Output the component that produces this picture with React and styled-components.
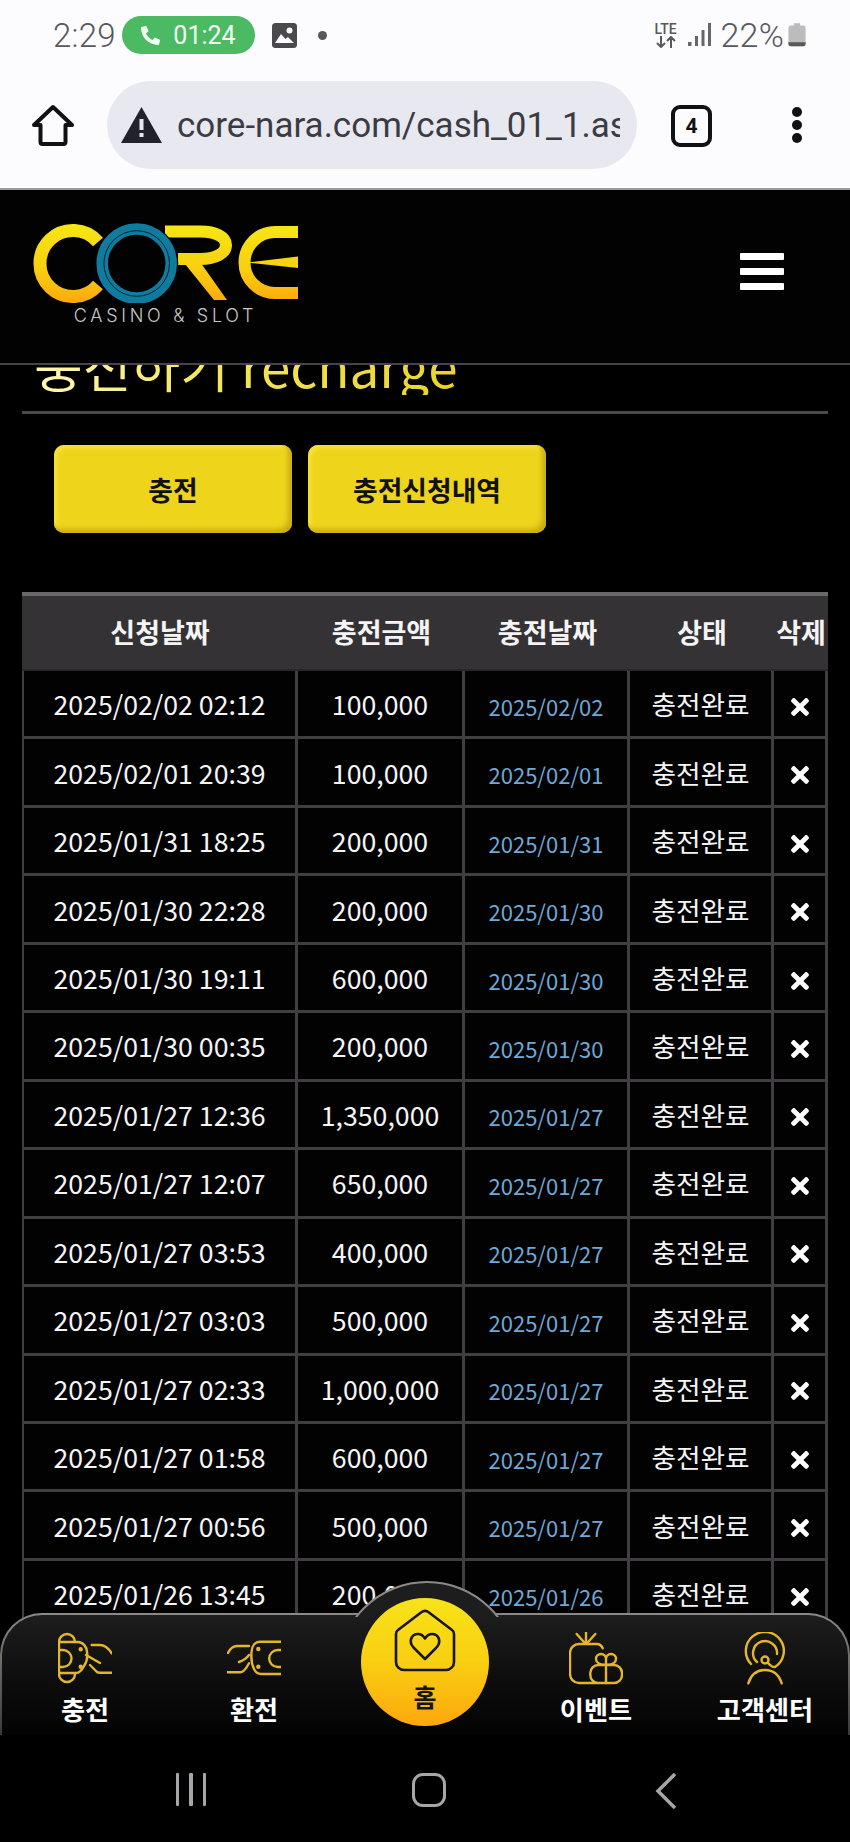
import React from 'react'
import styled, { createGlobalStyle } from 'styled-components'
import { FaTimes, FaPhoneAlt } from 'react-icons/fa'

const GlobalStyle = createGlobalStyle`
  * { box-sizing: border-box; }
  html, body { margin: 0; padding: 0; background: #000; }
  body { font-family: "Noto Sans CJK KR", "Noto Sans", sans-serif; }
`

const Page = styled.div`
  width: 850px;
  height: 1842px;
  display: flex;
  flex-direction: column;
  overflow: hidden;
  background: #000;
`

/* phone status bar */
const StatusBar = styled.div`
  height: 66px;
  flex: none;
  background: #fcfbfe;
  display: flex;
  align-items: center;
  padding: 4px 44px 0 53px;
  font-family: Roboto, sans-serif;
  color: #58585c;
`
const Clock = styled.span`
  width: 63px;
  font-size: 33px;
  letter-spacing: 0.2px;
  font-weight: 300;
  white-space: nowrap;
`
const CallPill = styled.div`
  margin-left: 6px;
  width: 133px;
  height: 38px;
  border-radius: 19px;
  background: #4cb963;
  color: #f4fff6;
  display: flex;
  align-items: center;
  justify-content: center;
  gap: 13px;
  font-size: 25px;
`
const GalleryIcon = styled.svg`
  margin-left: 17px;
  width: 25px;
  height: 25px;
`
const StatusDot = styled.span`
  margin-left: 21px;
  width: 9px;
  height: 9px;
  border-radius: 50%;
  background: #58585c;
`
const StatusRight = styled.div`
  margin-left: auto;
  display: flex;
  align-items: center;
`
const LteMark = styled.div`
  width: 28px;
  display: flex;
  flex-direction: column;
  align-items: center;
  font-size: 14px;
  line-height: 13px;
  font-weight: 500;
  color: #58585c;
`
const SignalIcon = styled.svg`
  margin-left: 8px;
  width: 24px;
  height: 24px;
`
const Percent = styled.span`
  margin-left: 9px;
  font-size: 34px;
  font-weight: 300;
  letter-spacing: 0.2px;
`
const BatteryIcon = styled.svg`
  margin-left: 4px;
  width: 18px;
  height: 26px;
`

/* browser toolbar */
const BrowserBar = styled.div`
  height: 124px;
  flex: none;
  background: #fcfbfe;
  border-bottom: 2px solid #9b9b9f;
  display: flex;
  align-items: flex-start;
  padding: 15px 0 0 31px;
`
const HomeButton = styled.svg`
  width: 44px;
  height: 44px;
  margin-top: 22px;
  flex: none;
`
const AddressPill = styled.div`
  margin-left: 32px;
  width: 530px;
  height: 88px;
  border-radius: 44px;
  background: #e8e8f0;
  display: flex;
  align-items: center;
  padding: 0 17px 0 14px;
  flex: none;
`
const WarnIcon = styled.svg`
  width: 41px;
  height: 38px;
  flex: none;
`
const UrlText = styled.div`
  margin-left: 15px;
  font-family: Roboto, sans-serif;
  font-size: 35px;
  color: #3b3b44;
  white-space: nowrap;
  overflow: hidden;
`
const TabCount = styled.div`
  margin: 24px 0 0 34px;
  width: 41px;
  height: 42px;
  border: 4px solid #111;
  border-radius: 9px;
  display: flex;
  align-items: center;
  justify-content: center;
  font-family: Roboto, sans-serif;
  font-size: 21px;
  font-weight: 700;
  color: #111;
  flex: none;
`
const MenuDots = styled.div`
  margin: 26px 0 0 80px;
  display: flex;
  flex-direction: column;
  gap: 3px;
  span {
    width: 10px;
    height: 10px;
    border-radius: 50%;
    background: #111;
  }
`

/* site */
const Site = styled.div`
  position: relative;
  flex: 1;
  min-height: 0;
  display: flex;
  flex-direction: column;
  background: #000;
`
const SiteHeader = styled.header`
  height: 175px;
  flex: none;
  border-bottom: 2px solid #46444a;
  display: flex;
  justify-content: space-between;
  padding: 33px 66px 0 33px;
  background: #020203;
`
const LogoWrap = styled.div`
  width: 265px;
  display: flex;
  flex-direction: column;
  align-items: center;
`
const LogoMark = styled.svg`
  width: 265px;
  height: 80px;
`
const LogoCaption = styled.span`
  margin-top: 2px;
  font-family: Inter, sans-serif;
  font-size: 18px;
  line-height: 22px;
  font-weight: 300;
  letter-spacing: 3.7px;
  color: #c8c8c8;
  white-space: nowrap;
`
const Burger = styled.div`
  width: 44px;
  margin-top: 30px;
  display: flex;
  flex-direction: column;
  gap: 8px;
  span {
    height: 7px;
    background: #fff;
    border-radius: 1px;
  }
`
const Content = styled.main`
  flex: 1;
  min-height: 0;
  overflow: hidden;
  padding: 0 22px;
`
const TitleRow = styled.div`
  margin-top: -30px;
  padding: 0 0 16px 12px;
  border-bottom: 3px solid #4b494c;
`
const Title = styled.h1`
  margin: 0;
  display: inline-block;
  font-size: 53px;
  line-height: 60px;
  font-weight: 400;
  white-space: nowrap;
  background: linear-gradient(90deg, #fff8b8 0%, #f5e65e 40%, #ead42a 100%);
  -webkit-background-clip: text;
  background-clip: text;
  color: transparent;
`
const ButtonRow = styled.div`
  margin-top: 31px;
  padding-left: 32px;
  display: flex;
  gap: 16px;
`
const TabButton = styled.button`
  width: 238px;
  height: 88px;
  border: none;
  border-radius: 10px;
  background: #eed51c;
  box-shadow: inset -4px -4px 5px #c8ad14, inset 3px 3px 4px #f6e23a;
  color: #111;
  font-family: inherit;
  font-size: 26.8px;
  font-weight: 700;
`
const Table = styled.div`
  margin-top: 59px;
`
const columns = '276px 167px 165px 144px 54px'
const HeadRow = styled.div`
  height: 79px;
  display: grid;
  grid-template-columns: ${columns};
  background: #353236;
  border-top: 4px solid #6b686c;
  border-bottom: 2px solid #29272a;
`
const HeadCell = styled.div`
  display: flex;
  align-items: center;
  justify-content: center;
  padding-bottom: 2px;
  font-size: 27px;
  font-weight: 700;
  color: #f4f4f4;
  white-space: nowrap;
`
const Row = styled.div`
  height: 68.46px;
  display: grid;
  grid-template-columns: ${columns};
`
const Cell = styled.div`
  display: flex;
  align-items: center;
  justify-content: center;
  border-right: 3px solid #403e41;
  border-bottom: 3px solid #403e41;
  border-left: ${p => (p.$first ? '2px solid #403e41' : 'none')};
  font-size: 26.7px;
  color: #f5f5f5;
  white-space: nowrap;
  background: #020203;
`
const DateCell = styled(Cell)`
  padding-top: 4px;
  font-size: 22px;
  color: #6fa9d8;
`
const DeleteCell = styled(Cell)`
  padding-top: 6px;
  color: #fff;
`

/* bottom nav floating over the table */
const BottomNav = styled.nav`
  position: absolute;
  left: 0;
  right: 0;
  bottom: 0;
  height: 122px;
  display: grid;
  grid-template-columns: 166px 172px 170px 172px 166px;
  border: 2px solid transparent;
  border-bottom: none;
  border-radius: 42px 42px 0 0;
  background:
    linear-gradient(#1d1d1e 0%, #0d0d0e 55%, #030304 100%) padding-box,
    linear-gradient(#8d8a86 0%, #5d5b5a 60%, #3a3a3a 100%) border-box;
`
const NavBump = styled.div`
  position: absolute;
  left: 335px;
  top: -34px;
  width: 176px;
  height: 36px;
  overflow: hidden;
  &::before {
    content: '';
    position: absolute;
    left: 0;
    top: 0;
    width: 176px;
    height: 176px;
    border-radius: 50%;
    border: 2px solid #8d8a86;
    background: #1d1d1e;
  }
`
const NavItem = styled.div`
  display: flex;
  flex-direction: column;
  align-items: center;
  padding-top: 17px;
  color: #fff;
  font-size: 26.2px;
  line-height: 34px;
  font-weight: 700;
  white-space: nowrap;
  span {
    margin-top: 6px;
  }
`
const NavIcon = styled.svg`
  width: 54px;
  height: 54px;
  fill: none;
  stroke: #e3b62c;
  stroke-width: 2.4;
  stroke-linecap: round;
  stroke-linejoin: round;
`
const HomeCircle = styled.div`
  position: absolute;
  left: 359px;
  top: -17px;
  width: 128px;
  height: 128px;
  border-radius: 50%;
  background: linear-gradient(#f7e319 0%, #f9cf12 50%, #fda70c 100%);
  display: flex;
  flex-direction: column;
  align-items: center;
  padding-top: 11px;
  color: #151515;
  font-size: 25px;
  line-height: 34px;
  font-weight: 700;
  span {
    margin-top: 6px;
  }
`
const HomeHeart = styled.svg`
  width: 64px;
  height: 64px;
  fill: none;
  stroke: #191510;
  stroke-width: 2.6;
  stroke-linejoin: round;
`

/* android nav */
const AndroidNav = styled.div`
  height: 107px;
  flex: none;
  background: #000;
  display: grid;
  grid-template-columns: repeat(3, 238px);
  justify-items: center;
  align-items: start;
  padding: 38px 0 0 72px;
`
const RecentBars = styled.div`
  display: flex;
  gap: 10px;
  span {
    width: 3.5px;
    height: 33px;
    background: #a6a6a8;
    border-radius: 1px;
  }
`
const HomeSquare = styled.div`
  width: 34px;
  height: 34px;
  border: 3.5px solid #a6a6a8;
  border-radius: 11px;
`
const BackChevron = styled.svg`
  width: 24px;
  height: 36px;
  fill: none;
  stroke: #a6a6a8;
  stroke-width: 3.5;
`

const rows = [
  ['2025/02/02 02:12', '100,000', '2025/02/02'],
  ['2025/02/01 20:39', '100,000', '2025/02/01'],
  ['2025/01/31 18:25', '200,000', '2025/01/31'],
  ['2025/01/30 22:28', '200,000', '2025/01/30'],
  ['2025/01/30 19:11', '600,000', '2025/01/30'],
  ['2025/01/30 00:35', '200,000', '2025/01/30'],
  ['2025/01/27 12:36', '1,350,000', '2025/01/27'],
  ['2025/01/27 12:07', '650,000', '2025/01/27'],
  ['2025/01/27 03:53', '400,000', '2025/01/27'],
  ['2025/01/27 03:03', '500,000', '2025/01/27'],
  ['2025/01/27 02:33', '1,000,000', '2025/01/27'],
  ['2025/01/27 01:58', '600,000', '2025/01/27'],
  ['2025/01/27 00:56', '500,000', '2025/01/27'],
  ['2025/01/26 13:45', '200,000', '2025/01/26'],
]

const heads = ['신청날짜', '충전금액', '충전날짜', '상태', '삭제']

const Logo = () => (
  <LogoMark viewBox="33 222 265 80">
    <defs>
      <linearGradient id="coreGold" gradientUnits="userSpaceOnUse" x1="0" y1="223" x2="0" y2="302">
        <stop offset="0" stopColor="#f6e714" />
        <stop offset="0.55" stopColor="#f8d010" />
        <stop offset="1" stopColor="#fca90c" />
      </linearGradient>
    </defs>
    <path d="M98 241 A33 33 0 1 0 98 284" fill="none" stroke="url(#coreGold)" strokeWidth="13" />
    <path d="M165 230.5 H200 C216 230.5 226 236 226 244 C226 252 216 258 200 258 H178" fill="none" stroke="url(#coreGold)" strokeWidth="12" />
    <polygon points="181,258 198,258 227,299 214,299" fill="url(#coreGold)" />
    <path d="M298 231 H275 A30.5 30.5 0 0 0 275 292 H298" fill="none" stroke="url(#coreGold)" strokeWidth="12" />
    <polygon points="247,261.5 298,255.5 298,267" fill="url(#coreGold)" />
    <circle cx="136.7" cy="262.5" r="41.5" fill="#020203" />
    <circle cx="136.7" cy="262.5" r="34.5" fill="none" stroke="#0f7c9f" strokeWidth="11.5" />
    <circle cx="136.7" cy="262.5" r="32.8" fill="none" stroke="#05222c" strokeWidth="1" />
  </LogoMark>
)

const App = () => (
  <Page>
    <GlobalStyle />
    <StatusBar>
      <Clock>2:29</Clock>
      <CallPill>
        <FaPhoneAlt size={19} />
        <span>01:24</span>
      </CallPill>
      <GalleryIcon viewBox="0 0 25 25">
        <rect width="25" height="25" rx="3.5" fill="#4a4a4e" />
        <circle cx="17.5" cy="7.5" r="3" fill="#fcfbfe" />
        <path d="M3 20 L9 11 L13.5 16 L16 14 L22 20 Z" fill="#fcfbfe" />
      </GalleryIcon>
      <StatusDot />
      <StatusRight>
        <LteMark>
          LTE
          <svg width="24" height="12" viewBox="0 0 24 12" fill="none" stroke="#58585c" strokeWidth="2">
            <path d="M7 0 V11 M3 7 L7 11 L11 7 M17 12 V1 M13 5 L17 1 L21 5" />
          </svg>
        </LteMark>
        <SignalIcon viewBox="0 0 24 24" fill="#66666a">
          <rect x="0" y="19" width="3.5" height="4" />
          <rect x="7" y="13" width="3" height="10" />
          <rect x="13.5" y="7" width="3" height="16" />
          <rect x="20" y="0" width="3" height="23" />
        </SignalIcon>
        <Percent>22%</Percent>
        <BatteryIcon viewBox="0 0 20 26">
          <path d="M6.5 0 H13.5 V2.5 H17 a2.5 2.5 0 0 1 2.5 2.5 V23 a2.5 2.5 0 0 1 -2.5 2.5 H3 a2.5 2.5 0 0 1 -2.5 -2.5 V5 a2.5 2.5 0 0 1 2.5 -2.5 H6.5 Z" fill="#bcbcbc" />
          <path d="M0.5 21 H19.5 V23 a2.5 2.5 0 0 1 -2.5 2.5 H3 a2.5 2.5 0 0 1 -2.5 -2.5 Z" fill="#5a5a5a" />
        </BatteryIcon>
      </StatusRight>
    </StatusBar>

    <BrowserBar>
      <HomeButton viewBox="0 0 44 44" fill="none" stroke="#111" strokeWidth="4" strokeLinejoin="round">
        <path d="M22 4 L41 22 H34.5 V39 a2 2 0 0 1 -2 2 H11.5 a2 2 0 0 1 -2 -2 V22 H3 Z" />
      </HomeButton>
      <AddressPill>
        <WarnIcon viewBox="0 0 41 38">
          <path d="M20.5 1 L41 37 H0 Z" fill="#22222a" />
          <rect x="18.5" y="13" width="4" height="11" fill="#e8e8f0" />
          <rect x="18.5" y="27" width="4" height="4" fill="#e8e8f0" />
        </WarnIcon>
        <UrlText>core-nara.com/cash_01_1.asp</UrlText>
      </AddressPill>
      <TabCount>4</TabCount>
      <MenuDots>
        <span />
        <span />
        <span />
      </MenuDots>
    </BrowserBar>

    <Site>
      <SiteHeader>
        <LogoWrap>
          <Logo />
          <LogoCaption>CASINO &amp; SLOT</LogoCaption>
        </LogoWrap>
        <Burger>
          <span />
          <span />
          <span />
        </Burger>
      </SiteHeader>

      <Content>
        <TitleRow>
          <Title>충전하기 recharge</Title>
        </TitleRow>
        <ButtonRow>
          <TabButton>충전</TabButton>
          <TabButton>충전신청내역</TabButton>
        </ButtonRow>
        <Table>
          <HeadRow>
            {heads.map(h => <HeadCell key={h}>{h}</HeadCell>)}
          </HeadRow>
          {rows.map(([requested, amount, done]) => (
            <Row key={requested}>
              <Cell $first>{requested}</Cell>
              <Cell>{amount}</Cell>
              <DateCell>{done}</DateCell>
              <Cell>충전완료</Cell>
              <DeleteCell><FaTimes size={26} /></DeleteCell>
            </Row>
          ))}
        </Table>
      </Content>

      <BottomNav>
        <NavBump />
        <NavItem>
          <NavIcon viewBox="0 0 54 54">
            <path d="M1 42 V10 a8 8 0 0 1 16 0 M1 42 a8 8 0 0 0 16 0" />
            <path d="M1 10 H20 C25 10 29 15 29 20 C30 26 28 31 26 34 C24 38 22 41 18 41 H1" />
            <path d="M1 18 h4 a8.5 8.5 0 0 1 0 17 H1" />
            <path d="M33.7 13 H42 C47 13 51 17 53.7 21.3 M28 23 L42 31 M32 33 L38 39 C39 40.5 40 40.7 42 40.7 H53.7" />
            <circle cx="22.7" cy="17.3" r="1" fill="#e3b62c" />
            <circle cx="22.7" cy="34.7" r="1" fill="#e3b62c" />
          </NavIcon>
          <span>충전</span>
        </NavItem>
        <NavItem>
          <NavIcon viewBox="0 0 54 54">
            <path d="M53.7 9.7 H33 C28 9.7 25 14 24.5 20 C24 26 25 33 27 37 C29 41 31 42 34 42 H53.7" />
            <path d="M53.7 18 h-3 a8.5 8.5 0 0 0 0 17 h3" />
            <path d="M1 21 C3 17 6 14 10 14 H22 M12 30 C15 29 19 27 22 23 M0.3 40.3 H13.7 C17 40.3 20 35 22 31.3" />
            <circle cx="31.3" cy="17" r="1" fill="#e3b62c" />
            <circle cx="31.3" cy="34.7" r="1" fill="#e3b62c" />
          </NavIcon>
          <span>환전</span>
        </NavItem>
        <NavItem />
        <NavItem>
          <NavIcon viewBox="0 0 54 54">
            <path d="M33.7 16.3 C32.5 13.5 30.5 12 28 12 H10 a9 9 0 0 0 -9 9 V42 a9 9 0 0 0 9 9 H45 a8 8 0 0 0 8 -8 V41 a8 8 0 0 0 -8 -8 H29.3 a8 8 0 0 0 -8 8 V43 a8 8 0 0 0 8 8" />
            <path d="M37 33 V51 M37 33 C30 33 27 30 27 27 a5 5 0 0 1 10 0 V33 C44 33 47 30 47 27 a5 5 0 0 0 -10 0" />
            <path d="M17 0 V11 M7.7 2 L16 11.3 M26.3 2 L18 11.3" />
          </NavIcon>
          <span>이벤트</span>
        </NavItem>
        <NavItem>
          <NavIcon viewBox="0 0 54 54">
            <path d="M13 32 A19 19 0 1 1 37 35 Q34 35.5 30 31" />
            <path d="M19 30 A12 12 0 1 1 39 22" />
            <circle cx="27" cy="28" r="3.5" />
            <path d="M10.3 51.3 C13 43 19 38 27 38 C35 38 41 43 43.7 51.3" />
          </NavIcon>
          <span>고객센터</span>
        </NavItem>
        <HomeCircle>
          <HomeHeart viewBox="0 0 64 64">
            <path d="M28 3.5 C30.5 1.5 33.5 1.5 36 3.5 L59 21 C60.5 22 61 23.5 61 25 V53 a8 8 0 0 1 -8 8 H11 a8 8 0 0 1 -8 -8 V25 C3 23.5 3.5 22 5 21 Z" />
            <path d="M32 50 L21 39 C15 33 18 25 25 25 C28.5 25 30.5 27 32 29.5 C33.5 27 35.5 25 39 25 C46 25 49 33 43 39 Z" />
          </HomeHeart>
          <span>홈</span>
        </HomeCircle>
      </BottomNav>
    </Site>

    <AndroidNav>
      <RecentBars>
        <span />
        <span />
        <span />
      </RecentBars>
      <HomeSquare />
      <BackChevron viewBox="0 0 24 36">
        <path d="M20 1 L3 18 L20 35" />
      </BackChevron>
    </AndroidNav>
  </Page>
)

export default App
